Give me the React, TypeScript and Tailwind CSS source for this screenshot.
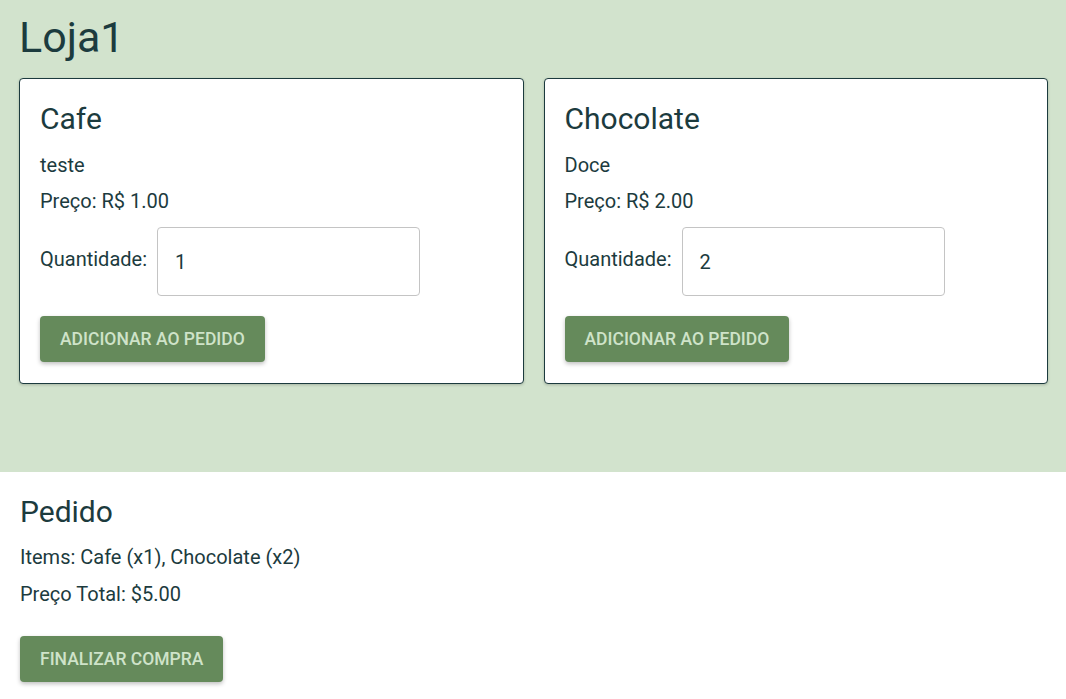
import React from "react";

const products = [
  { name: "Cafe", desc: "teste", price: "1.00", qty: "1" },
  { name: "Chocolate", desc: "Doce", price: "2.00", qty: "2" },
];

export default function App() {
  return (
    <div className="min-h-[699px] bg-white text-[#1c3b3e]" style={{ fontFamily: "Roboto, 'Noto Sans', sans-serif" }}>
      <div className="bg-[#d2e3cd] pl-[19px] pr-[18px] pt-[12px] pb-[88px]">
        <h1 className="text-[43px] leading-[50px] font-normal">Loja1</h1>
        <div className="mt-[16px] grid grid-cols-2 gap-[20px]">
          {products.map((p) => (
            <div
              key={p.name}
              className="bg-white border border-[#1c3b3e] rounded-[4px] shadow-[0_1px_3px_rgba(0,0,0,0.2)] px-[20px] pt-[20px] pb-[21px]"
            >
              <h2 className="text-[30px] leading-[40px] font-normal">{p.name}</h2>
              <p className="text-[20px] leading-[24px] mt-[14px]">{p.desc}</p>
              <p className="text-[20px] leading-[24px] mt-[12px]">Preço: R$ {p.price}</p>
              <div className="flex items-center gap-[10px] mt-[14px]">
                <span className="text-[20px] leading-[24px] -mt-[6px]">Quantidade:</span>
                <div className="w-[263px] h-[69px] border border-[#c4c4c4] rounded-[4px] flex items-center px-[17px] text-[20px]">
                  {p.qty}
                </div>
              </div>
              <button className="mt-[20px] h-[46px] px-[20px] rounded-[4px] bg-[#658a5b] text-[#cfe3c9] text-[17.5px] font-medium uppercase shadow-[0_2px_4px_rgba(0,0,0,0.25)]">
                Adicionar ao pedido
              </button>
            </div>
          ))}
        </div>
      </div>
      <div className="px-[20px] pt-[20px]">
        <h2 className="text-[30px] leading-[40px] font-normal">Pedido</h2>
        <p className="text-[20px] leading-[24px] mt-[13px]">Items: Cafe (x1), Chocolate (x2)</p>
        <p className="text-[20px] leading-[24px] mt-[13px]">Preço Total: $5.00</p>
        <button className="mt-[30px] h-[46px] px-[20px] rounded-[4px] bg-[#658a5b] text-[#cfe3c9] text-[17.5px] font-medium uppercase shadow-[0_2px_4px_rgba(0,0,0,0.25)]">
          Finalizar compra
        </button>
      </div>
    </div>
  );
}
